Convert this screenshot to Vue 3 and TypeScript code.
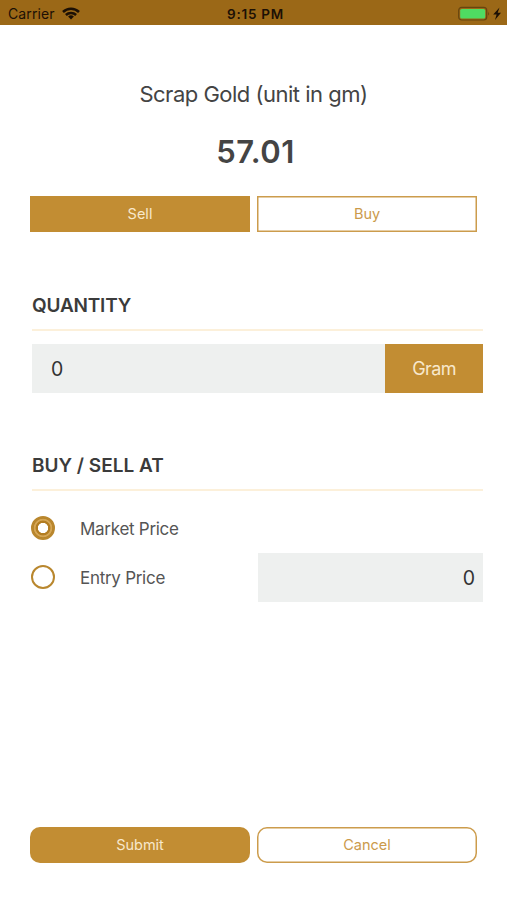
<script setup lang="ts">
import { ref } from 'vue'

type Side = 'sell' | 'buy'
type PriceMode = 'market' | 'entry'

const price = '57.01'
const side = ref<Side>('sell')
const mode = ref<PriceMode>('market')
const quantity = ref('0')
const entryPrice = ref('0')
</script>

<template>
  <div class="screen">
    <header class="status">
      <div class="status-left">
        <span class="carrier">Carrier</span>
        <svg class="wifi" width="18" height="13" viewBox="0 0 18 13">
          <g fill="none" stroke="#1c1005" stroke-width="2.5">
            <path d="M1 5 A11.4 11.4 0 0 1 17 5" />
            <path d="M3.9 8 A7.2 7.2 0 0 1 14.1 8" />
          </g>
          <path d="M9 12.4 L6.1 9.6 A4.2 4.2 0 0 1 11.9 9.6 Z" fill="#1c1005" />
        </svg>
      </div>
      <span class="clock">9:15 PM</span>
      <div class="status-right">
        <svg width="44" height="16" viewBox="0 0 44 16">
          <rect x="0.7" y="1.4" width="28" height="12.6" rx="3" fill="none" stroke="#66450f" stroke-width="1.2" />
          <rect x="2.2" y="2.9" width="25" height="9.6" rx="1.6" fill="#4fdc62" />
          <path d="M30.2 5.6 Q32 7.7 30.2 9.8 Z" fill="#66450f" />
          <path d="M41.5 1.6 L35.2 8.6 H38.6 L37 14 L43 6.8 H39.7 Z" fill="#1c1005" />
        </svg>
      </div>
    </header>

    <main class="content">
      <h1 class="title">Scrap Gold (unit in gm)</h1>
      <div class="price">{{ price }}</div>

      <div class="pair">
        <button class="btn" :class="{ filled: side === 'sell' }" @click="side = 'sell'">Sell</button>
        <button class="btn" :class="{ filled: side === 'buy' }" @click="side = 'buy'">Buy</button>
      </div>

      <section class="section quantity">
        <h2 class="heading tight">QUANTITY</h2>
        <div class="amount">
          <input v-model="quantity" class="field" inputmode="decimal" />
          <div class="unit">Gram</div>
        </div>
      </section>

      <section class="section at">
        <h2 class="heading">BUY / SELL AT</h2>
        <div class="options">
          <div class="option" @click="mode = 'market'">
            <span class="radio" :class="{ on: mode === 'market' }"></span>
            <span class="label">Market Price</span>
          </div>
          <div class="option" @click="mode = 'entry'">
            <span class="radio" :class="{ on: mode === 'entry' }"></span>
            <span class="label">Entry Price</span>
            <input v-model="entryPrice" class="field entry" inputmode="decimal" />
          </div>
        </div>
      </section>

      <div class="pair actions">
        <button class="btn round filled">Submit</button>
        <button class="btn round">Cancel</button>
      </div>
    </main>
  </div>
</template>

<style>
body {
  margin: 0;
  background: #fff;
}
</style>

<style scoped>
.screen {
  width: 507px;
  height: 900px;
  box-sizing: border-box;
  display: flex;
  flex-direction: column;
  overflow: hidden;
  background: #fff;
  color: #444;
  font-family: Inter, "Liberation Sans", sans-serif;
}
.status {
  height: 25px;
  flex: none;
  display: grid;
  grid-template-columns: 1fr auto 1fr;
  align-items: center;
  padding: 2px 5px 0 8px;
  box-sizing: border-box;
  background: #9b6817;
  color: #1c1005;
  font-size: 14px;
}
.status-left {
  display: flex;
  align-items: center;
  gap: 7px;
}
.carrier {
  letter-spacing: 0.1px;
}
.clock {
  margin-left: 1px;
  font-weight: 600;
  font-size: 13.5px;
  letter-spacing: 0.75px;
}
.status-right {
  display: flex;
  justify-content: flex-end;
}
.content {
  flex: 1;
  display: flex;
  flex-direction: column;
  padding: 53px 24px 37px 30px;
}
.title {
  margin: 0 6px 0 0;
  height: 32px;
  line-height: 32px;
  text-align: center;
  font-size: 22px;
  font-weight: 400;
  letter-spacing: -0.5px;
}
.price {
  margin: 22px 2px 0 0;
  height: 40px;
  line-height: 40px;
  text-align: center;
  font-size: 31px;
  font-weight: 600;
  letter-spacing: 0.5px;
}
.pair {
  display: grid;
  grid-template-columns: 220px 220px;
  gap: 7px;
  margin-top: 24px;
}
.btn {
  height: 36px;
  padding: 0 0 2px;
  border: 0;
  border-radius: 0;
  box-shadow: inset 0 0 0 1.5px #cc9c4c;
  background: #fff;
  color: #cb9a4b;
  font-family: inherit;
  font-size: 14.5px;
}
.btn.filled {
  box-shadow: none;
  background: #c28d33;
  color: #f8e8cc;
}
.btn.round {
  border-radius: 10px;
}
.section {
  margin-left: 2px;
}
.quantity {
  margin-top: 58px;
}
.heading {
  margin: 0;
  height: 41px;
  box-sizing: border-box;
  padding-top: 4px;
  line-height: 24px;
  border-bottom: 2px solid #fcf0da;
  font-size: 19px;
  font-weight: 600;
  color: #3b3b3b;
}
.heading.tight {
  letter-spacing: -0.2px;
}
.amount {
  display: flex;
  margin-top: 13px;
}
.field {
  flex: 1;
  min-width: 0;
  height: 49px;
  box-sizing: border-box;
  padding: 0 19px;
  border: 0;
  border-radius: 0;
  outline: 0;
  background: #eef0ef;
  color: #333;
  font-family: inherit;
  font-size: 19.5px;
}
.unit {
  width: 98px;
  height: 49px;
  line-height: 49px;
  text-align: center;
  background: #c28d33;
  color: #f8e8cc;
  font-size: 18px;
  letter-spacing: -0.6px;
}
.at {
  margin-top: 57px;
}
.options {
  display: flex;
  flex-direction: column;
  padding-top: 13px;
}
.option {
  display: flex;
  align-items: center;
  height: 49px;
}
.radio {
  width: 24px;
  height: 24px;
  box-sizing: border-box;
  margin: -2px 0 0 -1px;
  border: 2px solid #b9872e;
  border-radius: 50%;
  background: #fff;
}
.radio.on {
  background: radial-gradient(circle, #fff 0 4.8px, #b37d22 5.4px 7px, #d5a655 7.8px 8.8px, #b8842b 9.6px);
}
.label {
  width: 178px;
  margin-left: 25px;
  font-size: 17px;
  letter-spacing: -0.28px;
  color: #555;
}
.field.entry {
  padding: 0 8px;
  text-align: right;
}
.actions {
  margin-top: auto;
}
</style>
